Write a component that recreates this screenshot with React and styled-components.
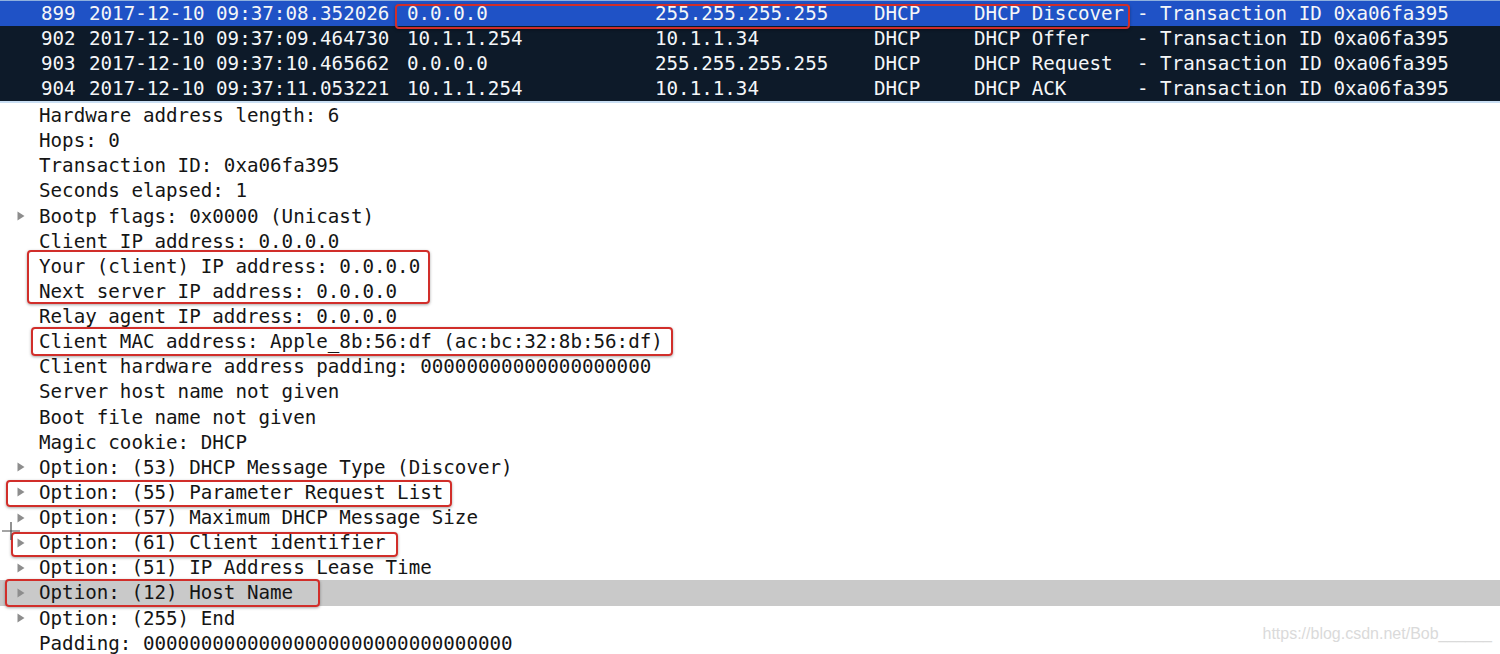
import React from "react";
import styled, { createGlobalStyle } from "styled-components";

const GlobalStyle = createGlobalStyle`
  html, body {
    margin: 0;
    padding: 0;
    background: #ffffff;
    overflow: hidden;
  }
  body {
    font-family: "DejaVu Sans Mono", "Liberation Mono", monospace;
  }
`;

let navy = "#0d1a29";
let selectedBlue = "#1f52c6";
let annotationRed = "#d12e2a";
let rowGray = "#c9c9c9";

const packets = [
  {
    no: "899",
    time: "2017-12-10 09:37:08.352026",
    src: "0.0.0.0",
    dst: "255.255.255.255",
    proto: "DHCP",
    label: "DHCP Discover",
    rest: "- Transaction ID 0xa06fa395",
    selected: true
  },
  {
    no: "902",
    time: "2017-12-10 09:37:09.464730",
    src: "10.1.1.254",
    dst: "10.1.1.34",
    proto: "DHCP",
    label: "DHCP Offer",
    rest: "- Transaction ID 0xa06fa395"
  },
  {
    no: "903",
    time: "2017-12-10 09:37:10.465662",
    src: "0.0.0.0",
    dst: "255.255.255.255",
    proto: "DHCP",
    label: "DHCP Request",
    rest: "- Transaction ID 0xa06fa395"
  },
  {
    no: "904",
    time: "2017-12-10 09:37:11.053221",
    src: "10.1.1.254",
    dst: "10.1.1.34",
    proto: "DHCP",
    label: "DHCP ACK",
    rest: "- Transaction ID 0xa06fa395"
  }
];

export default function App() {
  return (
    <Page>
      <GlobalStyle />
      <PacketList>
        {packets.map(p => (
          <PacketRow key={p.no} selected={p.selected}>
            <Cell w={48}>{p.no}</Cell>
            <Cell w={318}>{p.time}</Cell>
            {p.selected ? (
              <Marked t={3} r={7} b={-3} l={-12}>
                <PacketMiddle p={p} />
              </Marked>
            ) : (
              <PacketMiddle p={p} />
            )}
            <Cell>{p.rest}</Cell>
          </PacketRow>
        ))}
      </PacketList>

      <Details>
        <Line text="Hardware address length: 6" />
        <Line text="Hops: 0" />
        <Line text="Transaction ID: 0xa06fa395" />
        <Line text="Seconds elapsed: 1" />
        <Line text="Bootp flags: 0x0000 (Unicast)" arrow />
        <Line text="Client IP address: 0.0.0.0" />
        <MarkedGroup t={-4} r={-10} b={0} l={27}>
          <Line text="Your (client) IP address: 0.0.0.0" />
          <Line text="Next server IP address: 0.0.0.0" />
        </MarkedGroup>
        <Line text="Relay agent IP address: 0.0.0.0" />
        <Row>
          <Toggle />
          <Marked t={-2} r={-10} b={-2} l={-8}>
            <Text>Client MAC address: Apple_8b:56:df (ac:bc:32:8b:56:df)</Text>
          </Marked>
        </Row>
        <Line text="Client hardware address padding: 00000000000000000000" />
        <Line text="Server host name not given" />
        <Line text="Boot file name not given" />
        <Line text="Magic cookie: DHCP" />
        <Line text="Option: (53) DHCP Message Type (Discover)" arrow />
        <MarkedLine text="Option: (55) Parameter Request List" box={[0, -9, -2, -11]} />
        <Line text="Option: (57) Maximum DHCP Message Size" arrow />
        <MarkedLine text="Option: (61) Client identifier" box={[2, -12, -2, -6]} />
        <Line text="Option: (51) IP Address Lease Time" arrow />
        <MarkedLine text="Option: (12) Host Name" box={[-1, -27, -1, -12]} shaded />
        <Line text="Option: (255) End" arrow />
        <Line text="Padding: 00000000000000000000000000000000" />
        <Cursor width="18" height="18" viewBox="0 0 18 18">
          <path d="M9 0 V18 M0 9 H18" stroke="#4a4a4a" strokeWidth="1.2" />
        </Cursor>
      </Details>

      <Watermark>https://blog.csdn.net/Bob______</Watermark>
    </Page>
  );
}

function PacketMiddle({ p }) {
  return (
    <Middle>
      <Cell w={248}>{p.src}</Cell>
      <Cell w={219}>{p.dst}</Cell>
      <Cell w={100}>{p.proto}</Cell>
      <Cell w={163}>{p.label}</Cell>
    </Middle>
  );
}

function Line({ text, arrow }) {
  return (
    <Row>
      <Toggle>{arrow && <Arrow />}</Toggle>
      <Text>{text}</Text>
    </Row>
  );
}

function MarkedLine({ text, box, shaded }) {
  const [t, r, b, l] = box;
  return (
    <Row shaded={shaded}>
      <Marked t={t} r={r} b={b} l={l}>
        <Toggle>
          <Arrow />
        </Toggle>
        <Text>{text}</Text>
      </Marked>
    </Row>
  );
}

function Arrow() {
  return (
    <svg width="8" height="10" viewBox="0 0 8 10">
      <path d="M0.5 0.5 L7.5 5 L0.5 9.5 Z" fill="#8d8d8d" />
    </svg>
  );
}

const Page = styled.div`
  position: relative;
  width: 1500px;
  height: 654px;
  overflow: hidden;
  background: #ffffff;
  font-size: 19.2px;
`;

const PacketList = styled.div`
  background: ${navy};
  border-top: 1px solid #8fb0de;
  border-bottom: 2px solid #c9def3;
`;

const PacketRow = styled.div`
  display: flex;
  align-items: stretch;
  height: 25px;
  padding-left: 41px;
  color: #f4f6f8;
  white-space: pre;
  background: ${props => (props.selected ? selectedBlue : "transparent")};
`;

const Cell = styled.div`
  display: flex;
  align-items: center;
  flex: none;
  width: ${props => (props.w ? props.w + "px" : "auto")};
`;

const Middle = styled.div`
  display: flex;
  align-items: stretch;
`;

const Marked = styled.div`
  position: relative;
  display: flex;
  align-items: center;
  align-self: stretch;
  &::after {
    content: "";
    position: absolute;
    top: ${props => props.t}px;
    right: ${props => props.r}px;
    bottom: ${props => props.b}px;
    left: ${props => props.l}px;
    border: 2px solid ${annotationRed};
    border-radius: 4px;
    box-shadow: 0 1px 3px rgba(0, 0, 0, 0.35);
    pointer-events: none;
  }
`;

const MarkedGroup = styled(Marked)`
  display: block;
  width: fit-content;
`;

const Details = styled.div`
  position: relative;
  color: #151515;
`;

const Row = styled.div`
  display: flex;
  align-items: center;
  height: 25.14px;
  padding-left: 17px;
  white-space: pre;
  background: ${props => (props.shaded ? rowGray : "transparent")};
`;

const Toggle = styled.div`
  display: flex;
  align-items: center;
  width: 22px;
  flex: none;
`;

const Text = styled.span`
  line-height: 25px;
`;

const Cursor = styled.svg`
  position: absolute;
  left: 2px;
  top: 419px;
`;

const Watermark = styled.div`
  position: absolute;
  right: 8px;
  top: 625px;
  font-family: "Liberation Sans", Arial, sans-serif;
  font-size: 16px;
  white-space: nowrap;
  color: #dadada;
`;
